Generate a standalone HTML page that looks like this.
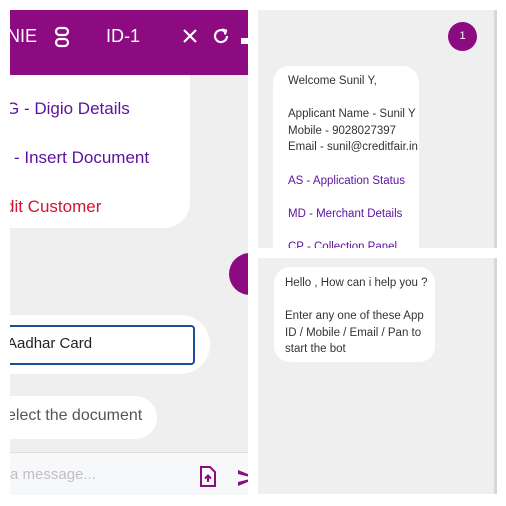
<html><head><style>
body{margin:0;width:506px;height:506px;background:#fff;position:relative;overflow:hidden;font-family:"Liberation Sans",Arial,sans-serif}
.a{position:absolute}
.bg{background:#efeff0}
</style></head><body>
<div class="a bg" style="left:10px;top:10px;width:238px;height:485px;overflow:hidden">
 <div class="a" style="left:0;top:0;width:238px;height:65px;background:#8c0b80;color:#fff;font-size:18px">
  <div class="a" style="left:-3px;top:16px">NIE</div>
  <svg class="a" style="left:44px;top:16px" width="16" height="22" viewBox="0 0 16 22" fill="none" stroke="#fff" stroke-width="2.2"><rect x="2" y="2" width="12" height="7" rx="3.5"/><rect x="2" y="13" width="12" height="7" rx="3.5"/></svg>
  <div class="a" style="left:96px;top:16px">ID-1</div>
  <svg class="a" style="left:172px;top:18px" width="16" height="16" stroke="#fff" stroke-width="2.2"><path d="M2 2L14 14M14 2L2 14"/></svg>
  <svg class="a" style="left:202px;top:17px" width="18" height="18" fill="none" stroke="#fff" stroke-width="2.2"><path d="M15 9A6 6 0 1 1 12.5 4.2"/><path d="M10 2.5L14 3.5L13 7.5" fill="#fff"/></svg>
  <div class="a" style="left:231px;top:28px;width:8px;height:6px;background:#fff"></div>
 </div>
 <div class="a" style="left:0;top:65px;width:180px;height:153px;background:#fff;border-radius:0 0 26px 0"></div>
 <div class="a" style="left:-4px;top:89px;font-size:17px;color:#5b12a0">G - Digio Details</div>
 <div class="a" style="left:4px;top:138px;font-size:17px;color:#5b12a0">- Insert Document</div>
 <div class="a" style="left:-5px;top:187px;font-size:17px;color:#d11632">dit Customer</div>
 <div class="a" style="left:219px;top:243px;width:42px;height:42px;border-radius:50%;background:#8c0b80"></div>
 <div class="a" style="left:0;top:305px;width:200px;height:59px;background:#fff;border-radius:0 30px 30px 0"></div>
 <div class="a" style="left:-6px;top:315px;width:187px;height:36px;border:2px solid #1b4c9c;border-radius:4px;background:#fff"></div>
 <div class="a" style="left:-3px;top:325px;font-size:15px;color:#222">Aadhar Card</div>
 <div class="a" style="left:0;top:386px;width:147px;height:43px;background:#fff;border-radius:0 22px 22px 0"></div>
 <div class="a" style="left:-3px;top:397px;font-size:16px;color:#555">elect the document</div>
 <div class="a" style="left:0;top:442px;width:238px;height:43px;background:#f7f8fa;border-top:1px solid #ddd"></div>
 <div class="a" style="left:0;top:456px;font-size:15px;color:#c0c0c4">a message...</div>
 <svg class="a" style="left:189px;top:456px" width="18" height="21" fill="none" stroke="#8c0b80" stroke-width="2"><path d="M2 1H11L16 6V20H2Z"/><path d="M9 16V10M6 12.5L9 9.5L12 12.5"/></svg>
 <svg class="a" style="left:228px;top:460px" width="12" height="16"><path d="M0 0L12 5V7L0 4ZM0 12L12 9V11L0 16Z" fill="#8c0b80"/></svg>
</div>
<div class="a bg" style="left:258px;top:10px;width:236px;height:238px;overflow:hidden;border-right:3px solid #d8d8d8">
 <div class="a" style="left:237px;top:42px;width:3px;height:105px;background:#8c0b80"></div>
 <div class="a" style="left:190px;top:12px;width:29px;height:29px;border-radius:50%;background:#8c0b80;color:#fff;font-size:11px;text-align:center;line-height:29px">1</div>
 <div class="a" style="left:15px;top:56px;width:146px;height:200px;background:#fff;border-radius:16px"></div>
 <div class="a" style="left:30px;top:63px;font-size:11.5px;line-height:16.6px;color:#333">Welcome Sunil Y,<br><br>Applicant Name - Sunil Y<br>Mobile - 9028027397<br>Email - sunil@creditfair.in<br><br><span style="color:#5b12a0">AS - Application Status<br><br>MD - Merchant Details<br><br>CP - Collection Panel</span></div>
</div>
<div class="a bg" style="left:258px;top:258px;width:236px;height:236px;overflow:hidden;border-right:3px solid #d8d8d8">
 <div class="a" style="left:16px;top:9px;width:161px;height:95px;background:#fff;border-radius:16px"></div>
 <div class="a" style="left:27px;top:17px;font-size:11.5px;line-height:16.6px;color:#333">Hello , How can i help you ?<br><br>Enter any one of these App<br>ID / Mobile / Email / Pan to<br>start the bot</div>
</div>
</body></html>
